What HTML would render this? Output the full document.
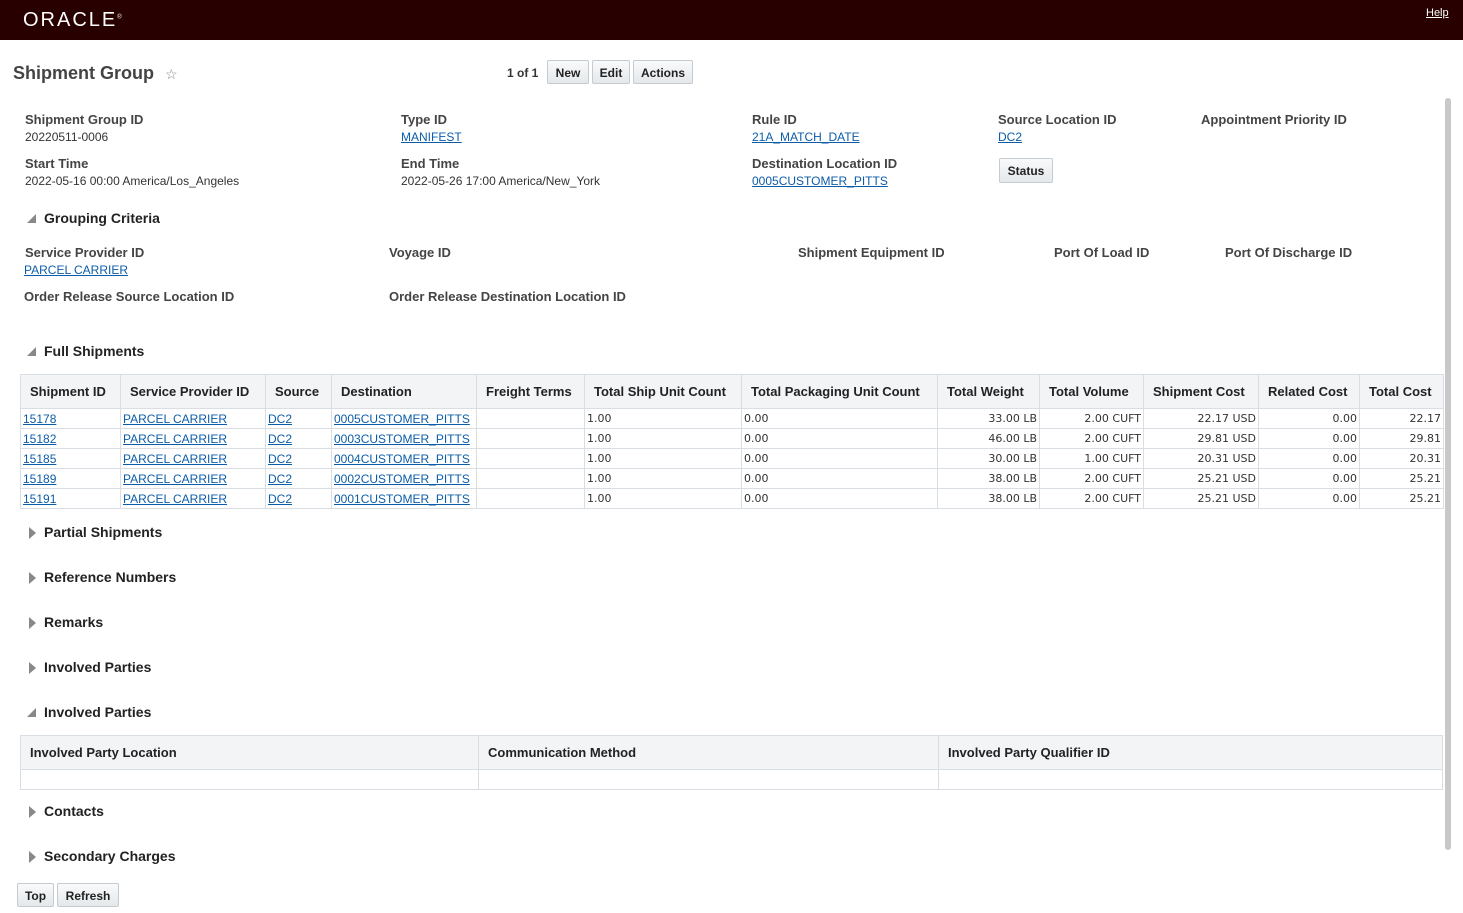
<!DOCTYPE html><html><head><style>
body{margin:0;width:1463px;height:913px;position:relative;overflow:hidden;background:#fff;font-family:"Liberation Sans",Arial,sans-serif;font-size:13px;color:#333}
.a{position:absolute;white-space:nowrap}
.l{font-weight:bold;color:#444;font-size:13px}
a{color:#0d5ca8;text-decoration:underline}
.v{font-size:12px;color:#333}
.lk{font-size:12px}
.btn{position:absolute;height:24px;border:1px solid #c4ccd2;background:linear-gradient(#f9fafb,#e4e8eb);font-weight:bold;font-size:12px;color:#222;line-height:24px;text-align:center;box-sizing:border-box;border-radius:2px}
.sec{font-weight:bold;font-size:14px;color:#222}
.tri{position:absolute;width:0;height:0}
.tr{border-top:6px solid transparent;border-bottom:6px solid transparent;border-left:7px solid #888}
.td{border-left:9px solid transparent;border-bottom:9px solid #888}
table{border-collapse:collapse;position:absolute;table-layout:fixed}
th{background:#f2f4f6;font-weight:bold;font-size:13px;color:#222;text-align:left;border:1px solid #d8dee4;padding:0 0 0 9px;height:33px;white-space:nowrap;overflow:hidden}
td{border:1px solid #d8dee4;height:19px;padding:0 2px;font-size:12px;white-space:nowrap;overflow:hidden}
td.n{font-family:"DejaVu Sans",sans-serif;font-size:11px;text-align:right}
td.m{font-family:"DejaVu Sans",sans-serif;font-size:11px}
</style></head><body>
<div class="a" style="left:0;top:0;width:1463px;height:40px;background:#280000"></div>
<div class="a" style="left:23px;top:9px;color:#fff;font-size:20px;letter-spacing:2px;font-weight:normal">ORACLE<sup style="font-size:6px">®</sup></div>
<div class="a" style="left:1426px;top:7px;font-size:11px;color:#fff;text-decoration:underline">Help</div>
<div class="a" style="left:13px;top:63px;font-size:18px;font-weight:bold;color:#444">Shipment Group <span style="font-size:14px;font-weight:normal;color:#888;margin-left:6px">☆</span></div>
<div class="a" style="left:507px;top:66px;font-size:12px;font-weight:bold;color:#333">1 of 1</div>
<div class="btn" style="left:547px;top:60px;width:42px">New</div>
<div class="btn" style="left:592px;top:60px;width:38px">Edit</div>
<div class="btn" style="left:633px;top:60px;width:60px">Actions</div>
<div class="a" style="left:1445px;top:98px;width:6px;height:752px;background:#c8c8c8;border-radius:3px"></div>

<div class="a l" style="left:25px;top:112px">Shipment Group ID</div><div class="a v" style="left:25px;top:130px">20220511-0006</div>
<div class="a l" style="left:401px;top:112px">Type ID</div><a class="a lk" style="left:401px;top:130px">MANIFEST</a>
<div class="a l" style="left:752px;top:112px">Rule ID</div><a class="a lk" style="left:752px;top:130px">21A_MATCH_DATE</a>
<div class="a l" style="left:998px;top:112px">Source Location ID</div><a class="a lk" style="left:998px;top:130px">DC2</a>
<div class="a l" style="left:1201px;top:112px">Appointment Priority ID</div>
<div class="a l" style="left:25px;top:156px">Start Time</div><div class="a v" style="left:25px;top:174px">2022-05-16 00:00 America/Los_Angeles</div>
<div class="a l" style="left:401px;top:156px">End Time</div><div class="a v" style="left:401px;top:174px">2022-05-26 17:00 America/New_York</div>
<div class="a l" style="left:752px;top:156px">Destination Location ID</div><a class="a lk" style="left:752px;top:174px">0005CUSTOMER_PITTS</a>
<div class="btn" style="left:999px;top:158px;width:54px;height:25px">Status</div>

<div class="tri td" style="left:27px;top:214px"></div><div class="a sec" style="left:44px;top:210px">Grouping Criteria</div>
<div class="a l" style="left:25px;top:245px">Service Provider ID</div><a class="a lk" style="left:24px;top:263px">PARCEL CARRIER</a>
<div class="a l" style="left:389px;top:245px">Voyage ID</div>
<div class="a l" style="left:798px;top:245px">Shipment Equipment ID</div>
<div class="a l" style="left:1054px;top:245px">Port Of Load ID</div>
<div class="a l" style="left:1225px;top:245px">Port Of Discharge ID</div>
<div class="a l" style="left:24px;top:289px">Order Release Source Location ID</div>
<div class="a l" style="left:389px;top:289px">Order Release Destination Location ID</div>

<div class="tri td" style="left:27px;top:347px"></div><div class="a sec" style="left:44px;top:343px">Full Shipments</div>
<table style="left:20px;top:374px;width:1423px">
<colgroup><col style="width:100px"><col style="width:145px"><col style="width:66px"><col style="width:145px"><col style="width:108px"><col style="width:157px"><col style="width:196px"><col style="width:102px"><col style="width:104px"><col style="width:115px"><col style="width:101px"><col style="width:84px"></colgroup>
<tr><th>Shipment ID</th><th>Service Provider ID</th><th>Source</th><th>Destination</th><th>Freight Terms</th><th>Total Ship Unit Count</th><th>Total Packaging Unit Count</th><th>Total Weight</th><th>Total Volume</th><th>Shipment Cost</th><th>Related Cost</th><th>Total Cost</th></tr>
<tr><td><a>15178</a></td><td><a>PARCEL CARRIER</a></td><td><a>DC2</a></td><td><a>0005CUSTOMER_PITTS</a></td><td></td><td class="m">1.00</td><td class="m">0.00</td><td class="n">33.00 LB</td><td class="n">2.00 CUFT</td><td class="n">22.17 USD</td><td class="n">0.00</td><td class="n">22.17</td></tr>
<tr><td><a>15182</a></td><td><a>PARCEL CARRIER</a></td><td><a>DC2</a></td><td><a>0003CUSTOMER_PITTS</a></td><td></td><td class="m">1.00</td><td class="m">0.00</td><td class="n">46.00 LB</td><td class="n">2.00 CUFT</td><td class="n">29.81 USD</td><td class="n">0.00</td><td class="n">29.81</td></tr>
<tr><td><a>15185</a></td><td><a>PARCEL CARRIER</a></td><td><a>DC2</a></td><td><a>0004CUSTOMER_PITTS</a></td><td></td><td class="m">1.00</td><td class="m">0.00</td><td class="n">30.00 LB</td><td class="n">1.00 CUFT</td><td class="n">20.31 USD</td><td class="n">0.00</td><td class="n">20.31</td></tr>
<tr><td><a>15189</a></td><td><a>PARCEL CARRIER</a></td><td><a>DC2</a></td><td><a>0002CUSTOMER_PITTS</a></td><td></td><td class="m">1.00</td><td class="m">0.00</td><td class="n">38.00 LB</td><td class="n">2.00 CUFT</td><td class="n">25.21 USD</td><td class="n">0.00</td><td class="n">25.21</td></tr>
<tr><td><a>15191</a></td><td><a>PARCEL CARRIER</a></td><td><a>DC2</a></td><td><a>0001CUSTOMER_PITTS</a></td><td></td><td class="m">1.00</td><td class="m">0.00</td><td class="n">38.00 LB</td><td class="n">2.00 CUFT</td><td class="n">25.21 USD</td><td class="n">0.00</td><td class="n">25.21</td></tr>
</table>

<div class="tri tr" style="left:29px;top:527px"></div><div class="a sec" style="left:44px;top:524px">Partial Shipments</div>
<div class="tri tr" style="left:29px;top:572px"></div><div class="a sec" style="left:44px;top:569px">Reference Numbers</div>
<div class="tri tr" style="left:29px;top:617px"></div><div class="a sec" style="left:44px;top:614px">Remarks</div>
<div class="tri tr" style="left:29px;top:662px"></div><div class="a sec" style="left:44px;top:659px">Involved Parties</div>
<div class="tri td" style="left:27px;top:708px"></div><div class="a sec" style="left:44px;top:704px">Involved Parties</div>
<table style="left:20px;top:735px;width:1423px">
<colgroup><col style="width:458px"><col style="width:460px"><col></colgroup>
<tr><th>Involved Party Location</th><th>Communication Method</th><th>Involved Party Qualifier ID</th></tr>
<tr><td style="height:16px"></td><td></td><td></td></tr>
</table>
<div class="tri tr" style="left:29px;top:806px"></div><div class="a sec" style="left:44px;top:803px">Contacts</div>
<div class="tri tr" style="left:29px;top:851px"></div><div class="a sec" style="left:44px;top:848px">Secondary Charges</div>
<div class="btn" style="left:17px;top:883px;width:37px">Top</div>
<div class="btn" style="left:57px;top:883px;width:62px">Refresh</div>
</body></html>
